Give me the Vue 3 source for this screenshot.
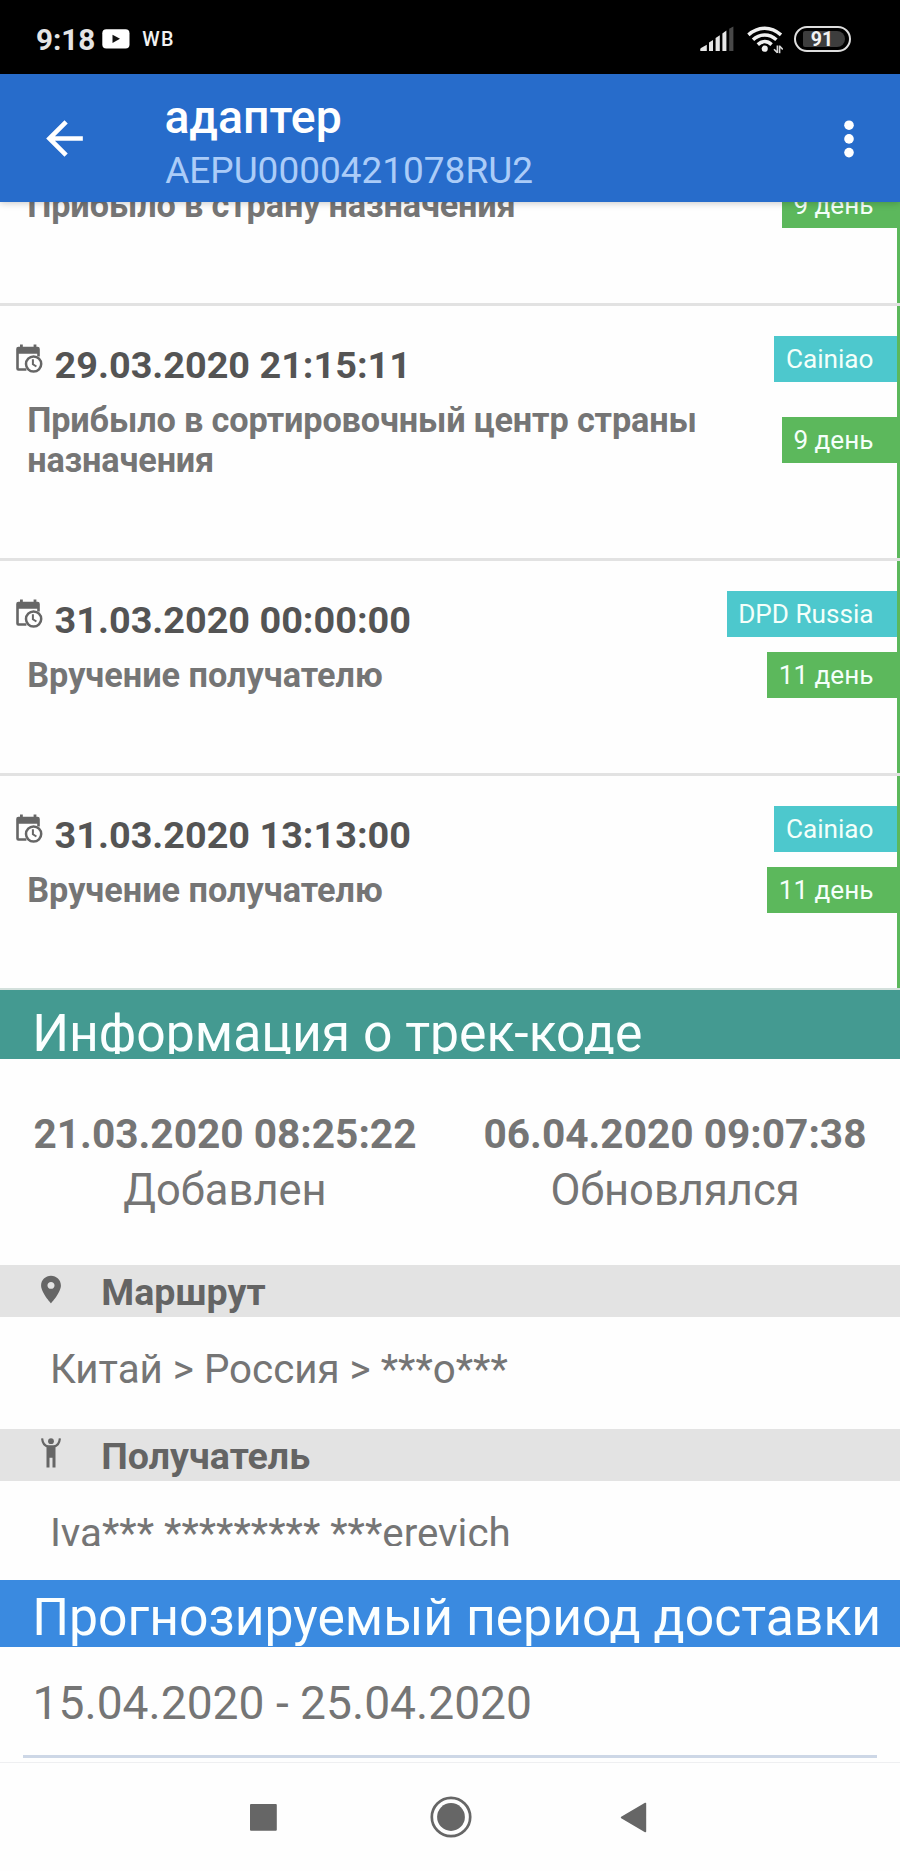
<script setup>
const events = [
  { date: '', carrier: '', text: 'Прибыло в страну назначения', day: '9 день', tight: true },
  { date: '29.03.2020 21:15:11', carrier: 'Cainiao', text: 'Прибыло в сортировочный центр страны назначения', day: '9 день', tight: true },
  { date: '31.03.2020 00:00:00', carrier: 'DPD Russia', text: 'Вручение получателю', day: '11 день' },
  { date: '31.03.2020 13:13:00', carrier: 'Cainiao', text: 'Вручение получателю', day: '11 день' },
]
</script>

<template>
  <div class="screen">
    <div class="status">
      <span class="clock">9:18</span>
      <svg class="yt" width="28" height="20" viewBox="0 0 28 20">
        <rect x="0.3" y="0.3" width="27.2" height="19.2" rx="4" fill="#fff" />
        <path d="M10.5 5.7L18 9.8L10.5 13.9Z" fill="#111" />
      </svg>
      <span class="wb">WB</span>
      <div class="sys">
        <svg width="34" height="26" viewBox="0 0 34 26">
          <g fill="#e6e6e6">
            <path d="M0.3 25V23.2Q0.3 22.5 1 22.1L6.8 18.8V25Z" />
            <path d="M9 25V16.6L13 14V25Z" />
            <path d="M15.6 25V12L19.8 9.2V25Z" />
            <path d="M22.4 25V7.4L26.4 4.6V25Z" />
          </g>
          <path d="M29.2 25V2.8L33.4 0.6V25Z" fill="#484848" />
        </svg>
        <svg class="wifi" width="36" height="28" viewBox="0 0 36 28">
          <g fill="none" stroke="#f0f0f0" stroke-width="3.5">
            <path d="M1.4 8.9Q9 2.3 17.7 2.3T34 8.9" />
            <path d="M6 13.8Q11.2 9 17.7 9T29.4 13.8" />
            <path d="M10.8 18.6Q14 15.6 17.7 15.6T24.6 18.6" />
          </g>
          <circle cx="17.7" cy="22.7" r="3.1" fill="#f0f0f0" />
          <g fill="none" stroke="#d8d8d8" stroke-width="1.6">
            <path d="M30.4 19.4V27M27 23.2L30.4 26.6" />
            <path d="M32.6 27.2V19.6M35.8 23.4L32.6 20" />
          </g>
        </svg>
        <div class="battery"><span class="level">91</span></div>
      </div>
    </div>

    <header class="bar">
      <svg class="back" width="55" height="55" viewBox="0 0 24 24">
        <path fill="#fff" d="M20 11H7.83l5.59-5.59L12 4l-8 8 8 8 1.41-1.41L7.83 13H20v-2z" />
      </svg>
      <div class="titles">
        <div class="title">адаптер</div>
        <div class="subtitle">AEPU0000421078RU2</div>
      </div>
      <svg class="more" width="10" height="38" viewBox="0 0 10 38">
        <circle cx="5" cy="5.2" r="4.8" fill="#fff" />
        <circle cx="5" cy="18.9" r="4.8" fill="#fff" />
        <circle cx="5" cy="32.6" r="4.8" fill="#fff" />
      </svg>
    </header>

    <main class="content">
      <div class="events">
        <article v-for="(e, i) in events" :key="i" class="event">
          <div class="head">
            <template v-if="e.date">
              <svg class="cal" width="27" height="30" viewBox="0 0 27 30">
                <path fill="#666" d="M4 0.4H6.8V2.8H17.6V0.4H20.4V2.8H21.6Q23.8 2.8 23.8 5V12.4H21.2V9.8H2.8V24.2H10.4V26.8H2.4Q0.2 26.8 0.2 24.6V5Q0.2 2.8 2.4 2.8H4Z" />
                <circle cx="17.6" cy="20" r="7.6" fill="none" stroke="#666" stroke-width="2.5" />
                <path d="M16.9 15.2V20.3L20.4 22.5" fill="none" stroke="#666" stroke-width="2" />
              </svg>
              <div class="date">{{ e.date }}</div>
              <div class="badge carrier">{{ e.carrier }}</div>
            </template>
          </div>
          <div class="body">
            <div class="desc" :class="{ tight: e.tight }">{{ e.text }}</div>
            <div class="badge day">{{ e.day }}</div>
          </div>
        </article>
      </div>

      <h2 class="section teal"><span class="clip">Информация о трек-коде</span></h2>

      <div class="stats">
        <div class="stat"><b>21.03.2020 08:25:22</b><span>Добавлен</span></div>
        <div class="stat"><b>06.04.2020 09:07:38</b><span>Обновлялся</span></div>
      </div>

      <div class="label">
        <svg width="34" height="33" viewBox="0 0 24 24" preserveAspectRatio="none">
          <path fill="#666" d="M12 2C8.13 2 5 5.13 5 9c0 5.25 7 13 7 13s7-7.75 7-13c0-3.87-3.13-7-7-7zm0 9.5c-1.38 0-2.5-1.12-2.5-2.5s1.12-2.5 2.5-2.5 2.5 1.12 2.5 2.5-1.12 2.5-2.5 2.5z" />
        </svg>
        <span>Маршрут</span>
      </div>
      <div class="value route"><span>Китай &gt; Россия &gt; ***o***</span></div>

      <div class="label">
        <svg width="34" height="33" viewBox="0 0 34 33">
          <circle cx="17" cy="4.2" r="2.9" fill="#666" />
          <path fill="none" stroke="#666" stroke-width="2.2" d="M8.1 1.3Q8.8 8.8 14.4 9.6H19.6Q25.2 8.8 25.9 1.3" />
          <path fill="#666" d="M12.5 8.4H21.5V30.4H18.5V20.8H15.5V30.4H12.5Z" />
        </svg>
        <span>Получатель</span>
      </div>
      <div class="value recipient"><span>Iva*** ********* ***erevich</span></div>

      <h2 class="section blue"><span class="clip">Прогнозируемый период доставки</span></h2>
      <div class="period">15.04.2020 - 25.04.2020</div>
    </main>

    <nav class="nav">
      <svg width="27" height="27" viewBox="0 0 27 27"><rect width="26.8" height="26.8" rx="1" fill="#666" /></svg>
      <svg width="42" height="42" viewBox="0 0 42 42">
        <circle cx="21" cy="21" r="19.2" fill="none" stroke="#666" stroke-width="2.7" />
        <circle cx="21" cy="21" r="13.9" fill="#666" />
      </svg>
      <svg width="27" height="31" viewBox="0 0 27 31">
        <path d="M25.4 1.5V29.5L1.6 15.5Z" fill="#666" stroke="#666" stroke-width="1.6" stroke-linejoin="round" />
      </svg>
    </nav>
  </div>
</template>

<style>
body { margin: 0; background: #fff; }
</style>

<style scoped>
.screen {
  width: 900px;
  height: 1871px;
  display: flex;
  flex-direction: column;
  overflow: hidden;
  background: #fefefe;
  font-family: Roboto, sans-serif;
  white-space: nowrap;
}
.status {
  flex: none;
  height: 74px;
  background: #000;
  display: flex;
  align-items: flex-start;
  padding-left: 36px;
  box-sizing: border-box;
}
.clock { width: 66px; margin-top: 22px; font-size: 29.6px; font-weight: 700; line-height: 36px; color: #e4e4e4; }
.yt { margin-top: 29px; }
.wb { margin: 27px 0 0 12.2px; font-size: 19.8px; font-weight: 500; line-height: 26px; letter-spacing: 1.4px; color: #f2f2f2; }
.sys { display: flex; align-items: flex-start; margin-left: auto; padding: 26px 49px 0 0; }
.wifi { margin-left: 13px; }
.battery {
  width: 57px;
  height: 26px;
  margin-left: 11.5px;
  padding: 3px 4px 3px 7px;
  box-sizing: border-box;
  border: 2px solid #dedede;
  border-radius: 13px;
}
.level {
  display: block;
  height: 16px;
  border-radius: 2px 8px 8px 2px;
  background: #3d3d3d;
  color: #f2f2f2;
  font-size: 19.5px;
  font-weight: 700;
  line-height: 17px;
  text-align: center;
  padding-right: 4px;
}
.bar {
  flex: none;
  position: relative;
  z-index: 1;
  height: 127.7px;
  display: flex;
  align-items: flex-start;
  background: #276ccb;
  box-shadow: 0 1px 7px rgba(0, 0, 0, 0.22);
}
.back { margin: 37px 0 0 36.6px; }
.titles { margin: 15.6px 0 0 72.8px; }
.title { font-size: 46.35px; font-weight: 500; line-height: 54px; color: #fff; }
.subtitle { margin-top: 5.8px; padding-left: 0.8px; font-size: 36.98px; line-height: 44px; color: #abccf8; }
.more { margin: 45.5px 46px 0 auto; }

.content { flex: none; height: 1560.6px; overflow: hidden; }
.events { margin-top: -110.4px; }
.event { position: relative; padding-bottom: 75.3px; border-bottom: 3px solid #e2e2e2; }
.event:last-child { border-bottom-width: 2px; border-color: #d3e0dc; }
.event::after { content: ''; position: absolute; top: 0; right: 0; bottom: 0; width: 3px; background: #5cb85c; }
.head { display: flex; align-items: flex-start; height: 75.7px; padding: 29.4px 3px 0 15.7px; box-sizing: border-box; }
.cal { margin-top: 8.6px; }
.date { margin: 7.6px 0 0 11.9px; font-size: 37.82px; font-weight: 700; line-height: 44px; color: #545454; }
.body { display: flex; align-items: center; margin-top: 14.7px; padding: 0 3px 0 27.2px; }
.desc { width: 700px; padding: 3.35px 0 2.95px; font-size: 34.25px; font-weight: 700; line-height: 40px; color: #757575; white-space: normal; }
.tight { letter-spacing: -0.15px; }
.badge { height: 46.3px; margin-left: auto; padding: 0 23.5px 0 11.5px; font-size: 26.15px; line-height: 46.3px; color: #f4fffa; }
.carrier { background: #4dc8cd; }
.day { background: #5cb85c; }

.section { margin: 0; padding-left: 32.2px; box-sizing: border-box; font-size: 51.68px; font-weight: 400; line-height: 60px; color: #fbffff; }
.clip { display: block; overflow: hidden; }
.teal { height: 69px; padding-top: 13.7px; background: #449a91; }
.teal .clip { height: 49.7px; }
.blue { height: 66.7px; padding-top: 8px; background: #3a8ae0; }
.blue .clip { height: 57.7px; }

.stats { display: grid; grid-template-columns: 1fr 1fr; height: 205.4px; padding-top: 50.5px; box-sizing: border-box; text-align: center; color: #757575; }
.stat b { display: block; font-size: 40.65px; line-height: 48px; }
.stat span { display: block; margin-top: 7.8px; font-size: 43.5px; line-height: 52px; }

.label { display: flex; height: 52.3px; padding-left: 34px; background: #e3e3e3; }
.label + .value { margin: 0; }
.label svg { margin-top: 8.6px; }
.label span { margin: 3.2px 0 0 33.3px; font-size: 37.6px; font-weight: 700; line-height: 48px; color: #646464; }
.value { padding: 28.7px 0 0 49.9px; box-sizing: border-box; font-size: 40.3px; line-height: 48px; color: #757575; }
.value span { display: block; overflow: hidden; }
.route { height: 112px; }
.recipient { height: 99px; }
.recipient span { height: 36.4px; }
.period { height: 111.3px; margin: 0 23px; padding: 28.5px 0 0 9.6px; box-sizing: border-box; border-bottom: 3px solid #cdd7e6; font-size: 46.17px; line-height: 56px; color: #757575; }

.nav {
  flex: 1;
  display: flex;
  align-items: center;
  border-top: 1px solid #eeeff1;
  padding: 0 0 0 250px;
  background: #fefefe;
}
.nav svg:nth-child(2) { margin-left: 152.5px; }
.nav svg:nth-child(3) { margin-left: 148.5px; }
</style>
